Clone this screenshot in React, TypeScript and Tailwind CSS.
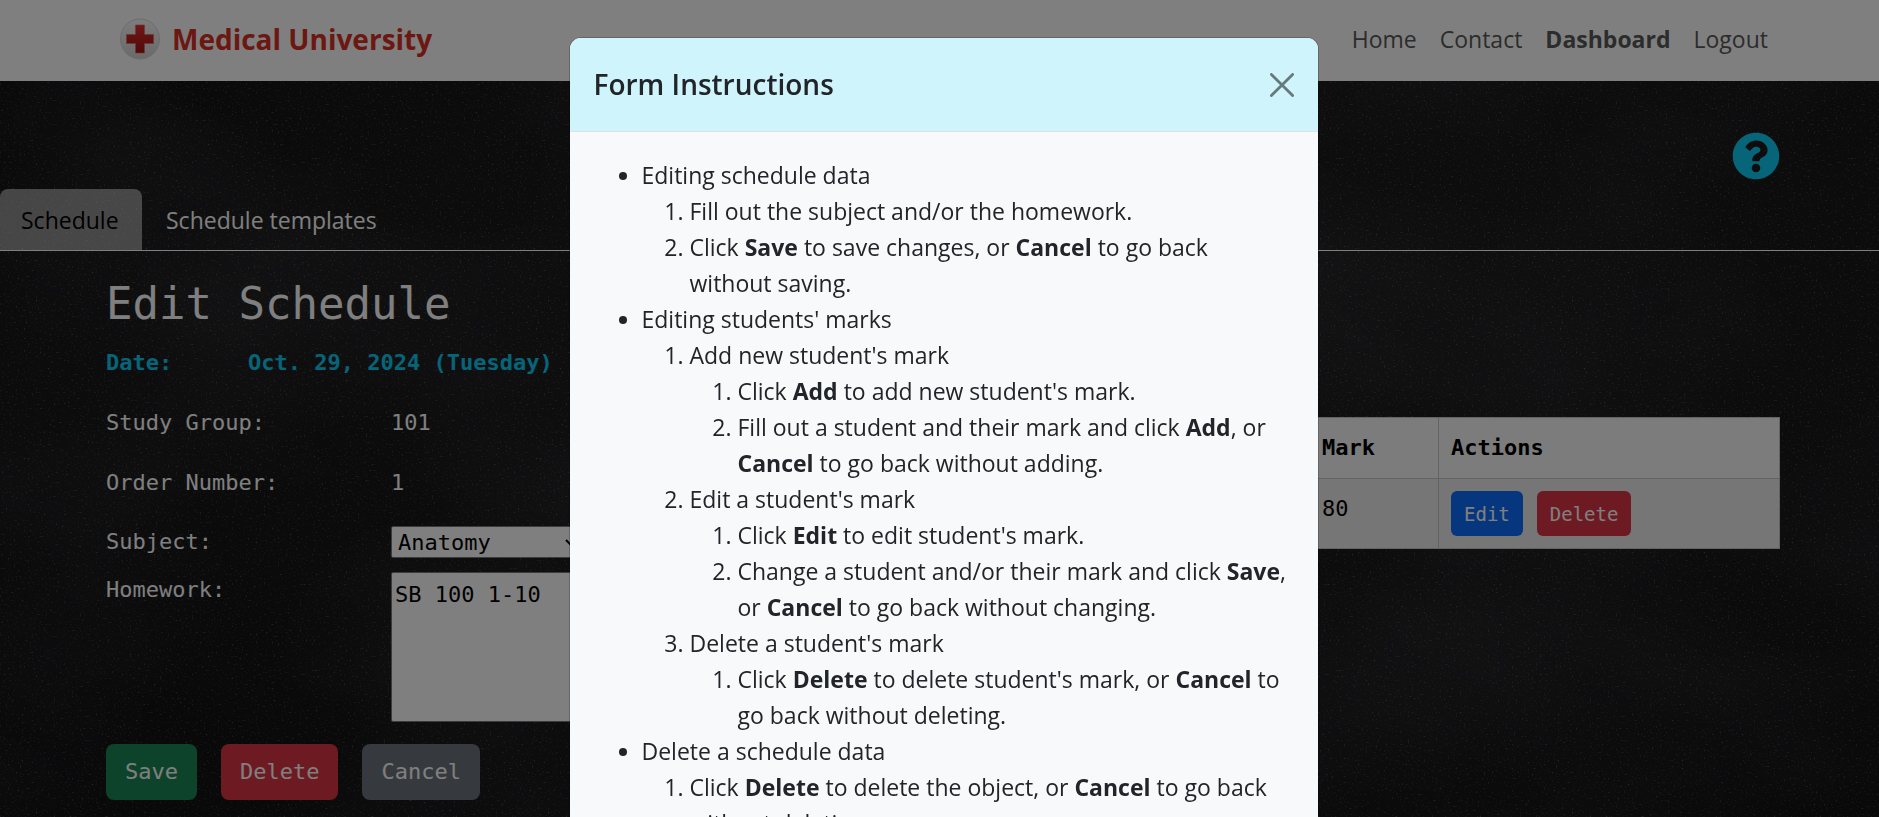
import { ReactNode } from "react";
import { FaQuestionCircle } from "react-icons/fa";

const sans = "font-['Open_Sans','Noto_Sans',sans-serif]";
const mono = "font-['DejaVu_Sans_Mono',monospace]";

function Chalkboard() {
  return (
    <svg className="absolute inset-0 h-full w-full" aria-hidden="true">
      <defs>
        <filter id="dust" x="0" y="0" width="100%" height="100%">
          <feTurbulence type="fractalNoise" baseFrequency="0.5" numOctaves="3" seed="8" />
          <feColorMatrix values="0 0 0 0 0.6  0 0 0 0 0.6  0 0 0 0 0.62  2.4 0 0 0 -1.5" />
        </filter>
        <filter id="smear" x="0" y="0" width="100%" height="100%">
          <feTurbulence type="fractalNoise" baseFrequency="0.003 0.005" numOctaves="3" seed="3" />
          <feColorMatrix values="0 0 0 0 0.5  0 0 0 0 0.5  0 0 0 0 0.56  0.3 0 0 0 -0.11" />
        </filter>
        <radialGradient id="vignette" cx="0.6" cy="0.4" r="0.7">
          <stop offset="0" stopColor="#1f1f21" />
          <stop offset="1" stopColor="#131315" />
        </radialGradient>
      </defs>
      <rect width="100%" height="100%" fill="url(#vignette)" />
      <rect width="100%" height="100%" filter="url(#smear)" opacity="0.5" />
      <rect width="100%" height="100%" filter="url(#dust)" opacity="0.5" />
    </svg>
  );
}

function Logo() {
  return (
    <svg viewBox="0 0 40 42" className="h-[42px] w-10" aria-hidden="true">
      <defs>
        <linearGradient id="disc" x1="0" y1="0" x2="0" y2="1">
          <stop offset="0" stopColor="#fbfbfb" />
          <stop offset="1" stopColor="#d4d4d4" />
        </linearGradient>
        <linearGradient id="cross" x1="0" y1="0" x2="0" y2="1">
          <stop offset="0" stopColor="#e0302c" />
          <stop offset="1" stopColor="#a01410" />
        </linearGradient>
      </defs>
      <ellipse cx="20" cy="21" rx="19.5" ry="20" fill="url(#disc)" stroke="#d8d8d8" />
      <path d="M15.500 7h9v9.500h9v9h-9V35h-9v-9.500h-9v-9h9z" fill="url(#cross)" stroke="#e06a66" strokeWidth="0.6" />
    </svg>
  );
}

function NavLink({ children, active }: { children: ReactNode; active?: boolean }) {
  return (
    <a href="#" className={active ? "font-bold" : ""}>
      {children}
    </a>
  );
}

function Instructions() {
  return (
    <ul className="list-disc pl-12">
      <li>
        Editing schedule data
        <ol className="list-decimal pl-12">
          <li>Fill out the subject and/or the homework.</li>
          <li>
            Click <b>Save</b> to save changes, or <b>Cancel</b> to go back without saving.
          </li>
        </ol>
      </li>
      <li>
        Editing students' marks
        <ol className="list-decimal pl-12">
          <li>
            Add new student's mark
            <ol className="list-decimal pl-12">
              <li>
                Click <b>Add</b> to add new student's mark.
              </li>
              <li>
                Fill out a student and their mark and click <b>Add</b>, or <b>Cancel</b> to go back without adding.
              </li>
            </ol>
          </li>
          <li>
            Edit a student's mark
            <ol className="list-decimal pl-12">
              <li>
                Click <b>Edit</b> to edit student's mark.
              </li>
              <li>
                Change a student and/or their mark and click <b>Save</b>, or <b>Cancel</b> to go back without changing.
              </li>
            </ol>
          </li>
          <li>
            Delete a student's mark
            <ol className="list-decimal pl-12">
              <li>
                Click <b>Delete</b> to delete student's mark, or <b>Cancel</b> to go back without deleting.
              </li>
            </ol>
          </li>
        </ol>
      </li>
      <li>
        Delete a schedule data
        <ol className="list-decimal pl-12">
          <li>
            Click <b>Delete</b> to delete the object, or <b>Cancel</b> to go back without deleting.
          </li>
        </ol>
      </li>
    </ul>
  );
}

function InstructionsModal() {
  return (
    <div className="fixed inset-0 z-10 overflow-hidden bg-black/50 pt-[37px] pl-2">
      <div
        role="dialog"
        aria-modal="true"
        aria-labelledby="modal-title"
        className="mx-auto max-w-[750px] overflow-hidden rounded-xl border border-black/20 bg-[#f8f9fa] bg-clip-padding text-[23px] leading-9 text-[#212529]"
      >
        <div className="flex items-center justify-between border-b border-[#dee2e6] bg-[#cff4fc] p-6">
          <h2 id="modal-title" className="text-[28px] leading-[45px] font-semibold">
            Form Instructions
          </h2>
          <button type="button" aria-label="Close" className="opacity-50">
            <svg viewBox="0 0 24 24" className="size-6" fill="none" stroke="#000" strokeWidth="2.800" strokeLinecap="round">
              <path d="M1.400 1.400 22.600 22.600M22.600 1.400 1.400 22.600" />
            </svg>
          </button>
        </div>
        <div className="px-6 pt-[25px] pb-6">
          <Instructions />
        </div>
      </div>
    </div>
  );
}

export default function App() {
  return (
    <div className={`relative flex h-screen flex-col overflow-hidden text-[23px] leading-9 ${sans}`}>
      <Chalkboard />
      <header className="relative flex h-[81px] shrink-0 items-center justify-between bg-white pr-[111px] pb-1 pl-[120px] text-[#595959]">
        <a href="#" className="flex items-center gap-3 text-[28px] font-bold text-[#d83024]">
          <Logo />
          Medical University
        </a>
        <nav className="flex gap-[23px]">
          <NavLink>Home</NavLink>
          <NavLink>Contact</NavLink>
          <NavLink active>Dashboard</NavLink>
          <NavLink>Logout</NavLink>
        </nav>
      </header>

      <div className="relative flex justify-end pt-[51px] pr-[99px]">
        <button type="button" aria-label="Form instructions" className="text-[#0dcaf0]">
          <FaQuestionCircle className="size-12" />
        </button>
      </div>

      <nav className="relative mt-[9px] flex border-b border-white text-white">
        <a href="#" className="w-[142px] rounded-t-lg bg-white/50 pt-[13px] pb-3 pl-[21px] text-black">
          Schedule
        </a>
        <a href="#" className="px-6 pt-[13px] pb-3">
          Schedule templates
        </a>
      </nav>

      <main className={`relative grid grid-cols-2 pr-[99px] pl-[106px] text-[22px] text-white ${mono}`}>
        <form onSubmit={(e) => e.preventDefault()}>
          <h1 className="mt-6 text-[44px] leading-[58px]">Edit Schedule</h1>
          <p className="mt-3 flex font-bold text-[#0dcaf0]">
            <span className="w-[142px]">Date:</span>
            <span>Oct. 29, 2024 (Tuesday)</span>
          </p>
          <p className="mt-6 flex">
            <span className="w-[285px]">Study Group:</span>
            <span>101</span>
          </p>
          <p className="mt-6 flex">
            <span className="w-[285px]">Order Number:</span>
            <span>1</span>
          </p>
          <div className="mt-[23px] flex items-center">
            <label htmlFor="subject" className="w-[285px]">
              Subject:
            </label>
            <select
              id="subject"
              className="h-8 w-[188px] rounded-xs border border-[#767676] bg-white pl-0.5 text-black"
              defaultValue="Anatomy"
            >
              <option>Anatomy</option>
            </select>
          </div>
          <div className="mt-3 flex items-start">
            <label htmlFor="homework" className="w-[285px]">
              Homework:
            </label>
            <textarea
              id="homework"
              className="h-[150px] w-[400px] resize-none rounded-xs border border-[#767676] bg-white px-[3px] py-1 text-black"
              defaultValue="SB 100 1-10"
            />
          </div>
          <div className="mt-[22px] flex gap-6">
            <button type="submit" className="h-14 rounded-lg bg-[#198754] px-[19px]">
              Save
            </button>
            <button type="button" className="h-14 rounded-lg bg-[#dc3545] px-[19px]">
              Delete
            </button>
            <button type="button" className="h-14 rounded-lg bg-[#6c757d] px-[19px]">
              Cancel
            </button>
          </div>
        </form>

        <div className="pt-[166px]">
          <table className="w-full border-collapse text-left text-black">
            <thead>
              <tr className="bg-[#f8f9fa]">
                <th className="border border-[#c6c7c8] px-3 py-3">Student</th>
                <th className="w-[129px] border border-[#c6c7c8] px-3 py-3">Mark</th>
                <th className="w-[341px] border border-[#c6c7c8] px-3 py-3">Actions</th>
              </tr>
            </thead>
            <tbody>
              <tr className="bg-[#ecedee] align-top">
                <td className="border border-[#c6c7c8] px-3 py-3">Student 1</td>
                <td className="border border-[#c6c7c8] px-3 py-3">80</td>
                <td className="border border-[#c6c7c8] px-3 py-3">
                  <div className="flex gap-[14px] text-[19px] text-white">
                    <button type="button" className="h-[45px] rounded-md bg-[#0d6efd] px-[13px]">
                      Edit
                    </button>
                    <button type="button" className="h-[45px] rounded-md bg-[#dc3545] px-[13px]">
                      Delete
                    </button>
                  </div>
                </td>
              </tr>
            </tbody>
          </table>
        </div>
      </main>

      <InstructionsModal />
    </div>
  );
}
